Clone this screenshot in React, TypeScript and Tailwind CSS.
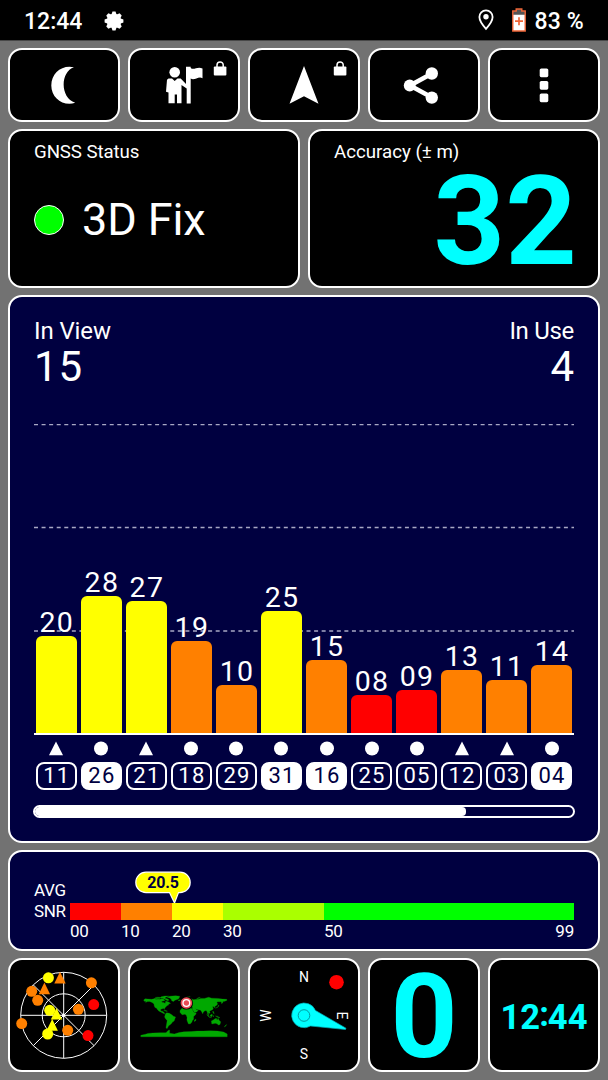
import type { ReactNode } from "react";

type Satellite = {
  id: string;
  snr: number;
  shape: "circle" | "triangle";
  used?: boolean;
};

const satellites: Satellite[] = [
  { id: "11", snr: 20, shape: "triangle" },
  { id: "26", snr: 28, shape: "circle", used: true },
  { id: "21", snr: 27, shape: "triangle" },
  { id: "18", snr: 19, shape: "circle" },
  { id: "29", snr: 10, shape: "circle" },
  { id: "31", snr: 25, shape: "circle", used: true },
  { id: "16", snr: 15, shape: "circle", used: true },
  { id: "25", snr: 8, shape: "circle" },
  { id: "05", snr: 9, shape: "circle" },
  { id: "12", snr: 13, shape: "triangle" },
  { id: "03", snr: 11, shape: "triangle" },
  { id: "04", snr: 14, shape: "circle", used: true },
];

const PX_PER_DB = 4.96;

function barClass(snr: number) {
  if (snr < 10) return "bg-[#ff0000]";
  if (snr < 20) return "bg-[#ff8000]";
  return "bg-[#ffff00]";
}

function Tile({ children, className = "" }: { children: ReactNode; className?: string }) {
  return (
    <div className={`relative rounded-[14px] border-2 border-white ${className}`}>{children}</div>
  );
}

function LockBadge() {
  return (
    <svg className="absolute top-[11px] right-[11px] h-[15px] w-[14px]" viewBox="0 0 14 15">
      <rect x="0.8" y="5.6" width="12.6" height="8.8" rx="1" fill="#fff" />
      <path d="M4 6.5V4a3.1 3.1 0 0 1 6.2 0V6.5" fill="none" stroke="#fff" strokeWidth="1.5" />
    </svg>
  );
}

function ActionTile({ children, locked = false }: { children: ReactNode; locked?: boolean }) {
  return (
    <Tile className="flex items-center justify-center bg-black">
      <svg className="h-[40px] w-[72px]" viewBox="-36 -20 72 40" fill="#fff">
        {children}
      </svg>
      {locked && <LockBadge />}
    </Tile>
  );
}

function StatusBar() {
  return (
    <div className="flex h-[41px] items-center justify-between border-b border-[#484848] bg-black px-[24px] text-[23px] leading-[36px] font-medium">
      <div className="flex items-center">
        <span className="pt-[4px]">12:44</span>
        <svg className="mt-[1px] ml-[22px] h-[20px] w-[20px]" viewBox="-10 -10 20 20" fill="#fff">
          <circle r="7.2" />
          {[0, 45, 90, 135, 180, 225, 270, 315].map((angle) => (
            <path key={angle} d="M-2.7 -6L-1.5 -9.4H1.5L2.7 -6Z" transform={`rotate(${angle})`} />
          ))}
        </svg>
      </div>
      <div className="flex items-center">
        <svg className="h-[22px] w-[16px]" viewBox="0 0 16 22">
          <path
            d="M8 1.4C4.2 1.4 1.4 4.2 1.4 8C1.4 12.5 8 19.8 8 19.8S14.6 12.5 14.6 8C14.6 4.2 11.8 1.4 8 1.4Z"
            fill="none"
            stroke="#fff"
            strokeWidth="1.8"
          />
          <circle cx="8" cy="7.8" r="2.7" fill="#fff" />
        </svg>
        <svg className="mr-[8px] ml-[18px] h-[24px] w-[14px]" viewBox="0 0 14 24">
          <path d="M4.2 1H9.8V3H13.2V23H0.8V3H4.2Z" fill="#fff" />
          <path d="M4.2 1H9.8V3H13.2V6.8H0.8V3H4.2Z" fill="#555" />
          <path d="M4.2 1H9.8V3H13.2V23H0.8V3H4.2Z" fill="none" stroke="#ef6537" strokeWidth="1.4" />
          <path d="M7 9.2V17.2M3 13.2H11" stroke="#ef6537" strokeWidth="1.7" />
        </svg>
        <span className="pt-[4px] tracking-[0.2px]">83 %</span>
      </div>
    </div>
  );
}

function SatelliteColumn({ sat }: { sat: Satellite }) {
  return (
    <div className="flex flex-col items-center justify-end">
      <div className="h-[27px] pl-[1px] text-[28.5px] leading-[27px] tracking-[1.3px]">
        {String(sat.snr).padStart(2, "0")}
      </div>
      <div
        className={`w-full rounded-t-[6px] ${barClass(sat.snr)}`}
        style={{ height: sat.snr * PX_PER_DB - 0.8 }}
      />
    </div>
  );
}

function SatelliteMarker({ sat }: { sat: Satellite }) {
  return (
    <div className="flex flex-col items-center gap-[6px]">
      <svg className="h-[15px] w-[16px]" viewBox="-8 -7.5 16 15" fill="#fff">
        {sat.shape === "circle" ? <circle r="7" /> : <path d="M0 -7L7 6.7H-7Z" />}
      </svg>
      <div
        className={`flex h-[28px] w-full items-center justify-center rounded-[8px] border-2 border-white pl-[1px] text-[22px] leading-[24px] tracking-[1.2px] ${
          sat.used ? "bg-white text-[#000040]" : "text-white"
        }`}
      >
        {sat.id}
      </div>
    </div>
  );
}

function SignalPanel() {
  return (
    <Tile className="flex h-[548px] flex-col bg-[#000040] px-[24px]">
      <div className="mt-[20px] flex justify-between">
        <div>
          <div className="text-[24px] leading-[28px] tracking-[-0.1px]">In View</div>
          <div className="mt-[1px] text-[42px] leading-[42px] tracking-[0.8px]">15</div>
        </div>
        <div className="text-right">
          <div className="text-[24px] leading-[28px] tracking-[-0.3px]">In Use</div>
          <div className="mt-[1px] text-[42px] leading-[42px]">4</div>
        </div>
      </div>

      <div className="relative mt-[36px] h-[314px]">
        <svg className="absolute inset-0 h-[314px] w-[540px]" viewBox="0 0 540 314">
          {[0.5, 103.5, 207].map((y) => (
            <path
              key={y}
              d={`M0 ${y}H540`}
              stroke="#a8a8c4"
              strokeWidth="1.4"
              strokeDasharray="4 3.57"
            />
          ))}
        </svg>
        <div className="relative grid h-[310px] grid-cols-12 gap-x-[4.3px] px-[2px]">
          {satellites.map((sat) => (
            <SatelliteColumn key={sat.id} sat={sat} />
          ))}
        </div>
        <div className="relative -mt-px h-[2px] bg-white" />
      </div>

      <div className="mt-[3px] grid grid-cols-12 gap-x-[4.3px] px-[2px]">
        {satellites.map((sat) => (
          <SatelliteMarker key={sat.id} sat={sat} />
        ))}
      </div>

      <div className="-mx-px mt-[15px] h-[13px] overflow-hidden rounded-full border-2 border-white">
        <div className="h-full w-[431px] rounded-r-[4px] bg-white" />
      </div>
    </Tile>
  );
}

const scaleSegments = [
  { label: "00", width: "w-[51px]", color: "bg-[#ff0000]" },
  { label: "10", width: "w-[51px]", color: "bg-[#ff8000]" },
  { label: "20", width: "w-[51px]", color: "bg-[#ffff00]" },
  { label: "30", width: "w-[101px]", color: "bg-[#aaff00]" },
  { label: "50", width: "flex-1", color: "bg-[#00ff00]" },
];

function AveragePanel() {
  return (
    <Tile className="flex h-[101px] bg-[#000040] px-[24px] pt-[28px] text-[17px] leading-[21px]">
      <div className="w-[36px] tracking-[-0.3px]">
        <div>AVG</div>
        <div>SNR</div>
      </div>
      <div className="relative flex-1 pt-[23px]">
        <svg className="absolute top-[-9px] left-[65px] h-[34px] w-[57px]" viewBox="0 0 57 34">
          <path
            d="M11 1.2H45A10.2 10.2 0 0 1 45 21.6H43.5L39.5 32L34.5 21.6H11A10.2 10.2 0 0 1 11 1.2Z"
            fill="#ffff00"
            stroke="#fff"
            strokeWidth="1.2"
          />
        </svg>
        <div className="absolute top-[-8px] left-[64.5px] w-[57px] text-center text-[16px] leading-[21px] font-bold tracking-[-0.2px] text-[#000040]">
          20.5
        </div>
        <div className="relative flex">
          {scaleSegments.map((segment) => (
            <div className={segment.width} key={segment.label}>
              <div className={`h-[17px] ${segment.color}`} />
              <div className="flex justify-between pt-[1px] leading-[20px] tracking-[-0.2px]">
                <span>{segment.label}</span>
                {segment.label === "50" && <span>99</span>}
              </div>
            </div>
          ))}
        </div>
      </div>
    </Tile>
  );
}

const skyDots: [number, number, string][] = [
  [-15.3, -37.5, "#ffff00"],
  [27.7, -32.5, "#ff8000"],
  [-32, -24, "#ff8000"],
  [-26, -15, "#ff8000"],
  [30, -10.7, "#ff0000"],
  [14.7, -6, "#ff8000"],
  [-14, -5, "#ffff00"],
  [-42, 8.3, "#ff8000"],
  [4, 15, "#ff8000"],
  [-16, 18.7, "#ffff00"],
  [24.3, 20.3, "#ff0000"],
];

const skyTriangles: [number, number, string][] = [
  [-3.7, -37.3, "#ff8000"],
  [-19.3, -26.5, "#ff8000"],
  [-7.2, -1.2, "#ffff00"],
  [-11.5, 10, "#ffff00"],
];

function SkyTile() {
  return (
    <Tile className="flex items-center justify-center bg-black">
      <svg className="h-[110px] w-[108px]" viewBox="-53.7 -55.3 108 110">
        <g fill="none" stroke="#fff" strokeWidth="1">
          <circle r="43" />
          <circle r="21.5" />
          <path d="M-43 0H43M0 -43V43M-30.4 -30.4L30.4 30.4M-30.4 30.4L30.4 -30.4" />
        </g>
        <circle r="1.7" fill="#fff" />
        {skyDots.map(([x, y, color]) => (
          <circle key={`${x}${y}`} cx={x} cy={y} r="5.5" fill={color} />
        ))}
        {skyTriangles.map(([x, y, color]) => (
          <path key={`${x}${y}`} d="M0 -6.2L5.7 5.5H-5.7Z" transform={`translate(${x} ${y})`} fill={color} />
        ))}
      </svg>
    </Tile>
  );
}

// Land outlines in degrees, longitude and negated latitude
const land = [
  "M-168 -66L-162 -71L-150 -70L-135 -69L-125 -71L-115 -68L-100 -69L-92 -72L-84 -69L-80 -63L-93 -61L-92 -57L-82 -55L-79 -51L-77 -57L-76 -62L-68 -59L-62 -57L-56 -52L-65 -49L-64 -45L-70 -43L-75 -38L-81 -31L-80 -26L-84 -30L-91 -29L-97 -27L-97 -21L-91 -18L-87 -21L-89 -16L-83 -15L-82 -9L-78 -8L-85 -9L-95 -15L-105 -20L-110 -25L-115 -32L-121 -35L-124 -42L-125 -49L-133 -56L-143 -60L-152 -60L-160 -56L-157 -60L-165 -61Z",
  "M-125 -72L-116 -74L-100 -72L-105 -68L-118 -69ZM-120 -77L-110 -78L-98 -77L-95 -80L-80 -83L-64 -83L-78 -77L-80 -74L-70 -71L-62 -66L-68 -63L-80 -69L-90 -74L-105 -75Z",
  "M-70 -78L-60 -82L-35 -84L-18 -82L-20 -75L-24 -70L-38 -65L-44 -60L-51 -63L-54 -70L-60 -75Z",
  "M-84 -22L-76 -22L-69 -19L-75 -19Z",
  "M-77 -8L-72 -12L-61 -10L-51 -4L-44 2L-35 6L-38 13L-41 22L-48 27L-53 34L-58 38L-64 42L-68 50L-71 55L-75 50L-73 38L-70 20L-76 14L-81 5Z",
  "M-17 -15L-16 -23L-9 -30L-5 -36L10 -37L12 -33L20 -31L30 -31L34 -28L38 -19L43 -12L51 -11L48 -4L40 3L40 15L35 20L33 27L27 34L19 35L15 27L12 17L13 8L9 -3L4 -6L-8 -4Z",
  "M44 25L43 19L50 14L49 20Z",
  "M-9 -37L-9 -43L-1 -44L-4 -48L3 -51L9 -54L10 -58L5 -60L12 -65L20 -70L30 -71L41 -67L45 -68L60 -69L70 -73L85 -73L103 -78L115 -74L140 -73L160 -70L178 -69L179 -65L170 -61L162 -60L161 -54L156 -51L156 -59L140 -59L136 -54L141 -50L135 -43L128 -39L129 -35L126 -35L123 -39L118 -38L122 -32L120 -26L110 -21L106 -18L109 -12L105 -9L100 -13L104 -2L98 -8L97 -16L92 -22L87 -21L80 -15L78 -8L73 -18L68 -24L60 -25L52 -27L48 -30L52 -24L59 -23L54 -17L44 -13L38 -22L34 -29L36 -36L27 -37L25 -40L20 -37L19 -41L12 -45L17 -40L15 -38L8 -44L3 -42L-1 -38Z",
  "M-6 -50L1 -52L-3 -58L-6 -57ZM-24 -66L-15 -67L-15 -64L-22 -63ZM52 -71L60 -76L68 -77L56 -71ZM12 -79L26 -80L18 -77Z",
  "M130 -32L140 -35L143 -44L146 -43L141 -36ZM95 -6L103 0L106 6L115 8L105 7L97 -2ZM109 -2L117 -7L118 -1L115 4L110 2ZM120 0L124 0L122 5ZM119 -18L123 -18L126 -7L121 -12ZM131 1L141 3L150 9L142 8Z",
  "M114 22L122 18L131 12L136 12L136 16L140 17L142 11L146 19L153 26L150 37L143 39L138 34L130 32L116 35Z",
  "M168 46L173 41L178 37L174 43L170 47Z",
  "M-180 83L-160 78L-150 75L-130 73L-100 72L-75 72L-66 62L-60 60L-60 74L-40 77L-20 71L0 68L30 67L55 65L80 65L110 64L140 65L165 69L180 77V89H-180Z",
];

function MapTile() {
  return (
    <Tile className="flex items-center justify-center bg-black">
      <svg className="h-[110px] w-[108px]" viewBox="-54 -56 108 110">
        <g fill="#00a800" stroke="#00a800" strokeWidth="1.2" transform="translate(0 -0.3) scale(0.24 0.237)">
          {land.map((d) => (
            <path d={d} key={d} />
          ))}
        </g>
        <g transform="translate(2.4 -13)">
          <circle r="6.6" fill="#000" />
          <circle r="5.8" fill="#e84c55" />
          <circle r="3.4" fill="none" stroke="#fff" strokeWidth="1.3" />
        </g>
      </svg>
    </Tile>
  );
}

function CompassTile() {
  return (
    <Tile className="flex items-center justify-center bg-black">
      <svg className="h-[110px] w-[108px]" viewBox="-54 -55.5 108 110">
        <g fill="#fff" fontSize="14" textAnchor="middle">
          <text x="0" y="-33.2">N</text>
          <text x="0" y="43.8">S</text>
          <text transform="translate(33 0) rotate(90)">E</text>
          <text transform="translate(-33 0) rotate(-90)">W</text>
        </g>
        <circle cx="32.5" cy="-33.3" r="7.3" fill="#ff0000" />
        <path
          d="M11.5 -5L42 12.7L41.5 14L6.5 10.5A12.4 12.4 0 1 1 11.5 -5Z"
          fill="#00ffff"
          stroke="#00a8b0"
          strokeWidth="0.7"
        />
        <circle r="5.8" fill="none" stroke="#009aa0" strokeWidth="1" />
      </svg>
    </Tile>
  );
}

export default function App() {
  return (
    <div className="h-[1080px] w-[608px] overflow-hidden bg-[#727272] font-['Roboto',sans-serif] text-white">
      <StatusBar />
      <main className="flex flex-col gap-[7px] px-[8px] pt-[7px]">
        <div className="grid h-[74px] grid-cols-5 gap-[8px]">
          <ActionTile>
            <path d="M10 -17.7C-2 -20.5 -12.7 -12 -12.7 0.4C-12.7 13 -1 21.5 11.2 17.8C-4 13 -4 -13 10 -17.7Z" />
          </ActionTile>
          <ActionTile locked>
            <circle cx="-9.3" cy="-12.8" r="5.3" />
            <path d="M-15.5 -6.5H-12L-9.3 -4L-6.5 -6.5H-3.3L2 -1V-18.3H6.7V-17C10 -14.3 13.5 -19.2 18.5 -16.5V-6.8C14 -9.2 10.5 -3.8 6.7 -6.4V18.5H2.7V3.5L-2.5 0V18.3H-7V9.5H-9.3V18.3H-15.5V7.5L-18 6.8L-17 -5.2Z" />
          </ActionTile>
          <ActionTile locked>
            <path d="M0 -19L14.5 18.7L0 11.2L-14.5 18.7Z" />
          </ActionTile>
          <ActionTile>
            <path d="M8 -11.5L-14 0.5L8 12.5" fill="none" stroke="#fff" strokeWidth="4.6" />
            <circle cx="-14.3" cy="0.5" r="5.9" />
            <circle cx="7.8" cy="-11.5" r="6.2" />
            <circle cx="7.8" cy="12.6" r="6.2" />
          </ActionTile>
          <ActionTile>
            <rect x="-4.3" y="-16.5" width="8.6" height="8.7" rx="1.6" />
            <rect x="-4.3" y="-4" width="8.6" height="8.7" rx="1.6" />
            <rect x="-4.3" y="8.5" width="8.6" height="8.7" rx="1.6" />
          </ActionTile>
        </div>

        <div className="grid h-[159px] grid-cols-2 gap-[8px]">
          <Tile className="bg-black px-[24px] pt-[10px]">
            <div className="text-[18.7px] leading-[22px] tracking-[-0.1px]">GNSS Status</div>
            <div className="mt-[30px] flex items-center gap-[18px]">
              <span className="h-[30px] w-[30px] rounded-full border border-white bg-[#00ff00]" />
              <span className="text-[45px] leading-[53px] tracking-[-0.1px]">3D Fix</span>
            </div>
          </Tile>
          <Tile className="bg-black px-[24px] pt-[10px]">
            <div className="text-[18.7px] leading-[22px]">Accuracy (± m)</div>
            <div className="mt-[9px] mr-[-3px] text-right text-[125px] leading-[100px] font-bold text-[#00ffff]">
              32
            </div>
          </Tile>
        </div>

        <SignalPanel />
        <AveragePanel />

        <div className="grid h-[114px] grid-cols-5 gap-[8px]">
          <SkyTile />
          <MapTile />
          <CompassTile />
          <Tile className="flex items-center justify-center bg-black pt-[4px] text-[117px] leading-[106px] font-bold text-[#00ffff]">
            0
          </Tile>
          <Tile className="flex items-center justify-center bg-black pt-[3px] text-[34.5px] leading-[40px] font-bold whitespace-nowrap text-[#00ffff]">
            12
            <span className="mx-[-1px] inline-block -translate-y-[3px]">:</span>
            44
          </Tile>
        </div>
      </main>
    </div>
  );
}
